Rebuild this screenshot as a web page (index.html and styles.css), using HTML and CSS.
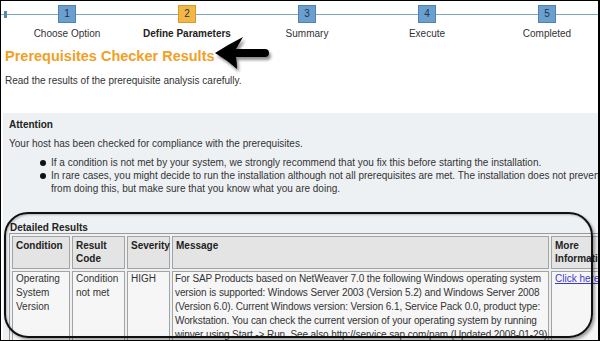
FILE: index.html
```html
<!DOCTYPE html>
<html>
<head>
<meta charset="utf-8">
<link rel="stylesheet" href="styles.css">
</head>
<body>
<div class="frame">
  <div class="steps">
    <span class="tick"></span>
    <div class="step"><span class="num">1</span><span class="label">Choose Option</span></div>
    <div class="step current"><span class="num">2</span><span class="label">Define Parameters</span></div>
    <div class="step"><span class="num">3</span><span class="label">Summary</span></div>
    <div class="step"><span class="num">4</span><span class="label">Execute</span></div>
    <div class="step"><span class="num">5</span><span class="label">Completed</span></div>
  </div>

  <div class="title-row">
    <h1 class="title">Prerequisites Checker Results</h1>
    <svg class="arrow" width="64" height="40" viewBox="0 0 64 40">
      <defs>
        <filter id="sh" x="-20%" y="-20%" width="150%" height="160%">
          <feGaussianBlur in="SourceAlpha" stdDeviation="1.6"/>
          <feOffset dx="2" dy="3" result="b"/>
          <feComponentTransfer><feFuncA type="linear" slope="0.45"/></feComponentTransfer>
          <feMerge><feMergeNode/><feMergeNode in="SourceGraphic"/></feMerge>
        </filter>
      </defs>
      <path filter="url(#sh)" fill="#000" d="M2 17 Q16 8 30 1 Q26 8 23 13 L52 13 Q56 13 56 17 Q56 21 52 21 L23 21 Q24 27 24 33 Q14 24 2 17 Z"/>
    </svg>
  </div>

  <p class="intro">Read the results of the prerequisite analysis carefully.</p>

  <div class="panel">
    <h2 class="sub">Attention</h2>
    <p class="para">Your host has been checked for compliance with the prerequisites.</p>
    <ul class="bullets">
      <li>If a condition is not met by your system, we strongly recommend that you fix this before starting the installation.</li>
      <li>In rare cases, you might decide to run the installation although not all prerequisites are met. The installation does not prevent you<br>from doing this, but make sure that you know what you are doing.</li>
    </ul>

    <h2 class="sub results-title">Detailed Results</h2>
    <table class="results">
      <tr>
        <th class="c1">Condition</th>
        <th class="c2">Result<br>Code</th>
        <th class="c3">Severity</th>
        <th class="c4">Message</th>
        <th class="c5">More<br>Information</th>
      </tr>
      <tr>
        <td>Operating<br>System<br>Version</td>
        <td>Condition<br>not met</td>
        <td>HIGH</td>
        <td class="msg">For SAP Products based on NetWeaver 7.0 the following Windows operating system<br>version is supported: Windows Server 2003 (Version 5.2) and Windows Server 2008<br>(Version 6.0). Current Windows version: Version 6.1, Service Pack 0.0, product type:<br>Workstation. You can check the current version of your operating system by running<br>winver using Start -&gt; Run. See also http://service.sap.com/pam (Updated 2008-01-29)</td>
        <td><a href="#" class="link">Click here</a></td>
      </tr>
    </table>
  </div>

  <div class="callout"></div>
</div>
</body>
</html>
```

FILE: styles.css
```css
* { box-sizing: border-box; }
html, body { margin: 0; padding: 0; background: #fff; }
body { font-family: "Liberation Sans", Arial, sans-serif; font-size: 10px; color: #222; }

.frame {
  position: relative;
  width: 600px;
  height: 341px;
  border: 1px solid #000;
  border-right: 2px solid #000;
  overflow: hidden;
  background: #fff;
}

.steps {
  position: relative;
  display: grid;
  grid-template-columns: repeat(5, 120px);
  padding-left: 6px;
  padding-top: 4px;
  height: 41px;
}
.steps::before {
  content: "";
  position: absolute;
  left: 0;
  right: 0;
  top: 13px;
  height: 1px;
  background: #7fa6bf;
}
.tick {
  position: absolute;
  left: 3px;
  top: 10px;
  width: 3px;
  height: 7px;
  background: #5d89a8;
}
.step {
  position: relative;
  display: flex;
  flex-direction: column;
  align-items: center;
}
.num {
  width: 18px;
  height: 18px;
  background: #6a9fce;
  border: 1px solid #4f83b0;
  color: #1b3550;
  font-size: 10px;
  line-height: 16px;
  text-align: center;
}
.current .num { background: #f3b746; border-color: #d89a2a; }
.label { margin-top: 4px; color: #333; white-space: nowrap; line-height: 13px; }
.current .label { font-weight: bold; color: #222; }

.title-row {
  display: flex;
  align-items: center;
  height: 28px;
  padding-left: 4px;
}
.title {
  margin: 0;
  font-size: 14.5px;
  font-weight: bold;
  color: #f2a024;
  line-height: 18px;
}
.arrow { margin-left: -2px; margin-top: -1px; flex: none; }

.intro { margin: 4px 0 0 4px; line-height: 13px; color: #333; height: 39px; }

.panel {
  background: #eef1f4;
  height: 228px;
  margin-left: 2px;
  padding: 5px 0 0 6px;
}
.sub { margin: 0; font-size: 10px; font-weight: bold; color: #222; line-height: 13px; }
.para { margin: 6px 0 0; line-height: 13px; color: #333; }
.bullets {
  margin: 6px 0 0;
  padding-left: 42px;
  list-style: none;
  white-space: nowrap;
  color: #333;
}
.bullets li { position: relative; line-height: 13px; }
.bullets li::before {
  content: "";
  position: absolute;
  left: -11px;
  top: 4px;
  width: 6px;
  height: 6px;
  border-radius: 50%;
  background: #111;
}

.results-title { margin-top: 26px; padding-left: 1px; }

.results {
  margin-top: -1px;
  margin-left: 0;
  border: 1px solid #9a9a9a;
  border-spacing: 2px;
  width: 635px;
  table-layout: fixed;
}
.results th, .results td {
  border: 1px solid #a3a3a3;
  padding: 3px 3px;
  text-align: left;
  vertical-align: top;
  line-height: 14px;
  font-size: 10px;
}
.results th { background: #e4e4e4; font-weight: bold; color: #222; height: 33px; line-height: 13px; padding-top: 2px; }
.results td { background: #f6f6f6; color: #333; padding-top: 0; white-space: nowrap; }
.results td.msg { letter-spacing: -0.1px; padding-left: 2px; }
.c1 { width: 58px; }
.c2 { width: 53px; }
.c3 { width: 43px; }
.c4 { width: 377px; }
.c5 { width: 90px; }
.link { color: #3a3ad0; text-decoration: underline; }

.callout {
  position: absolute;
  left: 3px;
  top: 211px;
  width: 589px;
  height: 126px;
  border: 2px solid #111;
  border-radius: 24px;
  box-shadow: 2px 2px 3px rgba(0,0,0,0.35), inset 1px 1px 2px rgba(0,0,0,0.25);
  pointer-events: none;
}
```
